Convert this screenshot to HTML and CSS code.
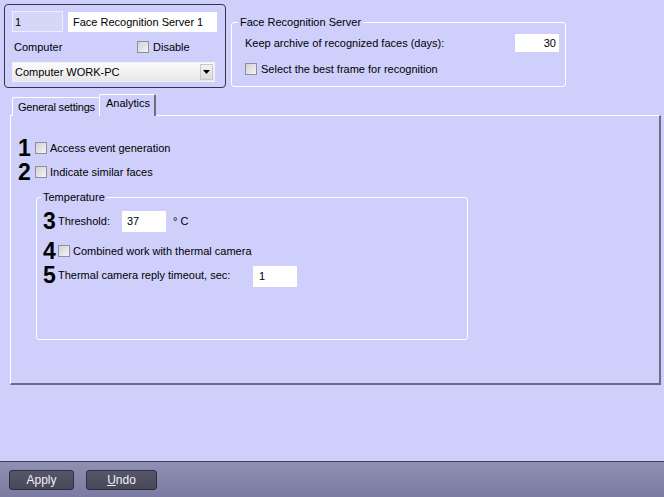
FILE: index.html
```html
<!DOCTYPE html>
<html lang="en">
<head>
  <meta charset="UTF-8" />
  <title>Face Recognition Server</title>
  <link rel="stylesheet" href="styles.css">
</head>
<body>

  <div class="main">
    <div class="top">
      <div class="object-box">
        <div class="obj-row">
          <div class="field id-field">1</div>
          <div class="field name-field">Face Recognition Server 1</div>
        </div>
        <div class="obj-row computer-row">
          <span class="computer-label">Computer</span>
          <span class="check"></span>
          <span class="check-text">Disable</span>
        </div>
        <div class="select">
          <span class="select-text">Computer WORK-PC</span>
          <span class="select-btn">
            <svg width="7" height="4" viewBox="0 0 7 4"><path d="M0 0H7L3.5 4Z" fill="#000"/></svg>
          </span>
        </div>
      </div>

      <fieldset class="group server-group">
        <legend>Face Recognition Server</legend>
        <div class="srv-row">
          <span>Keep archive of recognized faces (days):</span>
          <div class="field days-field">30</div>
        </div>
        <div class="srv-row srv-check">
          <span class="check"></span>
          <span class="check-text">Select the best frame for recognition</span>
        </div>
      </fieldset>
    </div>

    <div class="tabs">
      <div class="tab">General settings</div>
      <div class="tab active">Analytics</div>
    </div>

    <div class="panel">
      <div class="row">
        <span class="num">1</span>
        <span class="check"></span>
        <span class="check-text">Access event generation</span>
      </div>
      <div class="row">
        <span class="num">2</span>
        <span class="check"></span>
        <span class="check-text">Indicate similar faces</span>
      </div>

      <fieldset class="group temp-group">
        <legend>Temperature</legend>
        <div class="row row-threshold">
          <span class="num">3</span>
          <span class="label threshold-label">Threshold:</span>
          <div class="field small-field">37</div>
          <span class="unit">° C</span>
        </div>
        <div class="row row-combined">
          <span class="num">4</span>
          <span class="check"></span>
          <span class="check-text">Combined work with thermal camera</span>
        </div>
        <div class="row">
          <span class="num">5</span>
          <span class="label timeout-label">Thermal camera reply timeout, sec:</span>
          <div class="field small-field timeout-field">1</div>
        </div>
      </fieldset>
    </div>
  </div>

  <div class="bottom">
    <button class="btn btn-apply">Apply</button>
    <button class="btn btn-undo"><u>U</u>ndo</button>
  </div>

</body>
</html>
```

FILE: styles.css
```css
body {
  margin: 0;
  width: 664px;
  height: 497px;
  background: #cfcffb;
  font-family: 'Liberation Sans', Arial, sans-serif;
  font-size: 11px;
  color: #000;
  display: flex;
  flex-direction: column;
  overflow: hidden;
}

.main {
  flex: 1;
}

.top {
  display: flex;
  align-items: flex-start;
  padding: 4px 0 0 4px;
}

.object-box {
  box-sizing: border-box;
  width: 222px;
  height: 84px;
  border: 1px solid #34344a;
  border-radius: 4px;
  padding: 6px 0 0 7px;
}

.obj-row {
  display: flex;
  align-items: center;
}

.field {
  box-sizing: border-box;
  background: #fff;
  display: flex;
  align-items: center;
  padding: 0 4px;
}

.id-field {
  width: 51px;
  height: 21px;
  background: #d6d6f7;
  border: 1px solid #eeeeff;
  padding-left: 2px;
}

.name-field {
  width: 149px;
  height: 20px;
  margin-left: 5px;
  margin-top: 1px;
  padding-left: 5px;
}

.computer-row {
  height: 20px;
  margin-top: 5px;
}

.computer-label {
  margin-left: 2px;
  width: 123px;
}

.check {
  box-sizing: border-box;
  width: 12px;
  height: 12px;
  flex: none;
  border: 1px solid #8e8e9c;
  background: linear-gradient(135deg, #d2d2d6, #f4f4f6);
}

.check-text {
  margin-left: 4px;
}

.select {
  box-sizing: border-box;
  width: 203px;
  height: 20px;
  margin-top: 5px;
  border: 1px solid #f2f2f2;
  background: linear-gradient(#fbfbfb, #e8e8ea);
  display: flex;
  align-items: center;
  justify-content: space-between;
  padding: 0 1px 0 2px;
}

.select-btn {
  box-sizing: border-box;
  width: 13px;
  height: 16px;
  background: linear-gradient(#f2f2f2, #dcdcdc);
  border: 1px solid #c8c8c8;
  display: flex;
  align-items: center;
  justify-content: center;
}

.group {
  margin: 0;
  border: 1px solid #fff;
  border-radius: 3px;
  min-width: 0;
}

.group legend {
  padding: 0 2px;
  line-height: 13px;
}

.server-group {
  box-sizing: border-box;
  width: 335px;
  height: 71px;
  margin: 12px 0 0 5px;
  padding: 0 6px 0 6px;
}

.srv-row {
  display: flex;
  align-items: center;
  justify-content: space-between;
  height: 20px;
  margin-top: 4px;
  padding-left: 7px;
}

.srv-check {
  justify-content: flex-start;
  margin-top: 6px;
}

.days-field {
  width: 44px;
  height: 18px;
  justify-content: flex-end;
  padding-right: 3px;
}

.tabs {
  display: flex;
  align-items: flex-end;
  margin: 6px 0 -1px 12px;
  position: relative;
  z-index: 1;
}

.tab {
  box-sizing: border-box;
  height: 19px;
  width: 87px;
  padding: 3px 0 0 5px;
  white-space: nowrap;
  letter-spacing: -0.2px;
  border-top: 1px solid #fff;
  border-left: 1px solid #fff;
  border-radius: 2px 2px 0 0;
  background: #cfcffb;
}

.tab.active {
  width: 57px;
  height: 22px;
  padding: 2px 0 0 6px;
  letter-spacing: 0;
  border-right: 2px solid #6c6c86;
}

.panel {
  box-sizing: border-box;
  width: 651px;
  height: 270px;
  margin-left: 10px;
  border-top: 1px solid #fff;
  border-left: 1px solid #fff;
  border-right: 2px solid #6c6c86;
  border-bottom: 2px solid #6c6c86;
  padding: 20px 0 0 6px;
}

.row {
  display: flex;
  align-items: center;
  height: 24px;
}

.num {
  width: 15px;
  flex: none;
  text-align: center;
  font-weight: bold;
  font-size: 23px;
  line-height: 24px;
  margin-right: 3px;
}

.row .check-text {
  margin-left: 3px;
}

.temp-group {
  box-sizing: border-box;
  width: 432px;
  height: 149px;
  margin: 7px 0 0 19px;
  padding: 0 4px;
}

.temp-group .row {
  padding-left: 1px;
}

.temp-group .num {
  margin-right: 1px;
}

.row-threshold {
  margin-top: 5px;
}

.row-combined {
  margin-top: 6px;
}

.label {
  flex: none;
}

.threshold-label {
  width: 64px;
}

.timeout-label {
  width: 195px;
}

.small-field {
  width: 44px;
  height: 21px;
  padding-left: 5px;
}

.timeout-field {
  margin-top: 2px;
  padding-left: 6px;
}

.unit {
  margin-left: 7px;
}

.bottom {
  box-sizing: border-box;
  height: 36px;
  border-top: 1px solid #3e3e56;
  background: linear-gradient(#9090b4, #7a7aa2);
  display: flex;
  align-items: flex-start;
  padding: 8px 0 0 9px;
}

.btn {
  box-sizing: border-box;
  height: 20px;
  border: 1px solid #2e2e3e;
  border-radius: 3px;
  background: linear-gradient(#56566a, #48485a);
  color: #f0f0f6;
  font-family: 'Liberation Sans Narrow', 'Liberation Sans', Arial, sans-serif;
  font-size: 12px;
  padding: 0;
  cursor: pointer;
}

.btn-apply {
  width: 65px;
}

.btn-undo {
  width: 71px;
  margin-left: 12px;
}
```
